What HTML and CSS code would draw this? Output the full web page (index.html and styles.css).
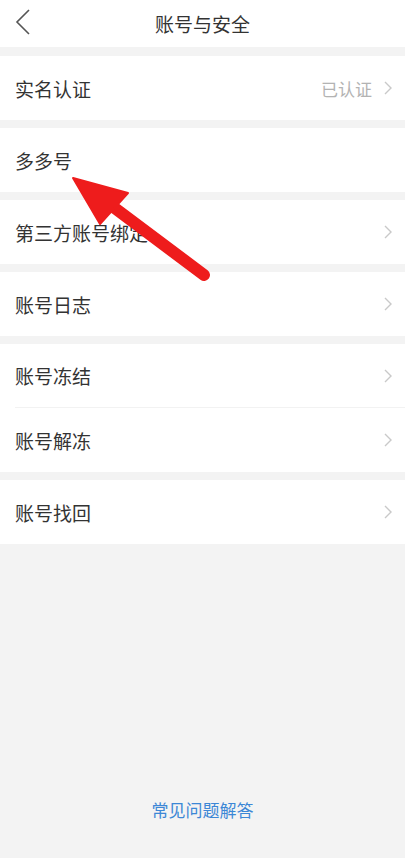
FILE: index.html
```html
<!DOCTYPE html>
<html lang="zh">
<head>
<meta charset="utf-8">
<link rel="stylesheet" href="styles.css">
</head>
<body>
<div class="page">
  <header class="nav">
    <svg class="back" width="18" height="28" viewBox="0 0 18 28"><polyline points="15,2 3,14 15,26" fill="none" stroke="#555" stroke-width="1.6"/></svg>
    <div class="title">账号与安全</div>
  </header>
  <div class="group">
    <div class="row"><span class="label">实名认证</span><span class="right"><span class="value">已认证</span><svg class="chev" width="8" height="14" viewBox="0 0 8 14"><polyline points="1,1 7,7 1,13" fill="none" stroke="#c9c9c9" stroke-width="1.4"/></svg></span></div>
  </div>
  <div class="group">
    <div class="row"><span class="label">多多号</span></div>
  </div>
  <div class="group">
    <div class="row"><span class="label">第三方账号绑定</span><span class="right"><svg class="chev" width="8" height="14" viewBox="0 0 8 14"><polyline points="1,1 7,7 1,13" fill="none" stroke="#c9c9c9" stroke-width="1.4"/></svg></span></div>
  </div>
  <div class="group">
    <div class="row"><span class="label">账号日志</span><span class="right"><svg class="chev" width="8" height="14" viewBox="0 0 8 14"><polyline points="1,1 7,7 1,13" fill="none" stroke="#c9c9c9" stroke-width="1.4"/></svg></span></div>
  </div>
  <div class="group">
    <div class="row divided"><span class="label">账号冻结</span><span class="right"><svg class="chev" width="8" height="14" viewBox="0 0 8 14"><polyline points="1,1 7,7 1,13" fill="none" stroke="#c9c9c9" stroke-width="1.4"/></svg></span></div>
    <div class="row"><span class="label">账号解冻</span><span class="right"><svg class="chev" width="8" height="14" viewBox="0 0 8 14"><polyline points="1,1 7,7 1,13" fill="none" stroke="#c9c9c9" stroke-width="1.4"/></svg></span></div>
  </div>
  <div class="group">
    <div class="row"><span class="label">账号找回</span><span class="right"><svg class="chev" width="8" height="14" viewBox="0 0 8 14"><polyline points="1,1 7,7 1,13" fill="none" stroke="#c9c9c9" stroke-width="1.4"/></svg></span></div>
  </div>
  <div class="spacer"></div>
  <div class="faq">常见问题解答</div>
  <svg class="arrow" width="405" height="300" viewBox="0 0 405 300">
    <line x1="112" y1="206" x2="204" y2="275" stroke="#ee1c1c" stroke-width="12" stroke-linecap="round"/>
    <polygon points="73,178 128,193 100,224" fill="#ee1c1c" stroke="#ee1c1c" stroke-width="2" stroke-linejoin="round"/>
  </svg>
</div>
</body>
</html>
```

FILE: styles.css
```css
html, body {
  margin: 0;
  padding: 0;
  background: #f3f3f3;
}
.page {
  position: relative;
  width: 405px;
  height: 858px;
  display: flex;
  flex-direction: column;
  font-family: "Noto Sans CJK SC", "Noto Sans", sans-serif;
  color: #333;
  overflow: hidden;
}
.nav {
  height: 47px;
  background: #fff;
  display: flex;
  align-items: center;
  justify-content: center;
  position: relative;
  margin-bottom: 9px;
}
.back {
  position: absolute;
  left: 14px;
  top: 8px;
}
.title {
  font-size: 19px;
  color: #333;
}
.group {
  background: #fff;
  margin-bottom: 8px;
  padding-left: 15px;
}
.row {
  height: 64px;
  display: flex;
  align-items: center;
  justify-content: space-between;
  padding-right: 13px;
  box-sizing: border-box;
}
.row.divided {
  border-bottom: 1px solid #f2f2f2;
}
.label {
  font-size: 19px;
  color: #333;
}
.right {
  display: flex;
  align-items: center;
  gap: 12px;
}
.value {
  font-size: 17px;
  color: #b3b3b3;
}
.spacer {
  flex: 1;
}
.faq {
  text-align: center;
  font-size: 17px;
  color: #3c87d6;
  margin-bottom: 36px;
}
.arrow {
  position: absolute;
  left: 0;
  top: 0;
  pointer-events: none;
}
```
